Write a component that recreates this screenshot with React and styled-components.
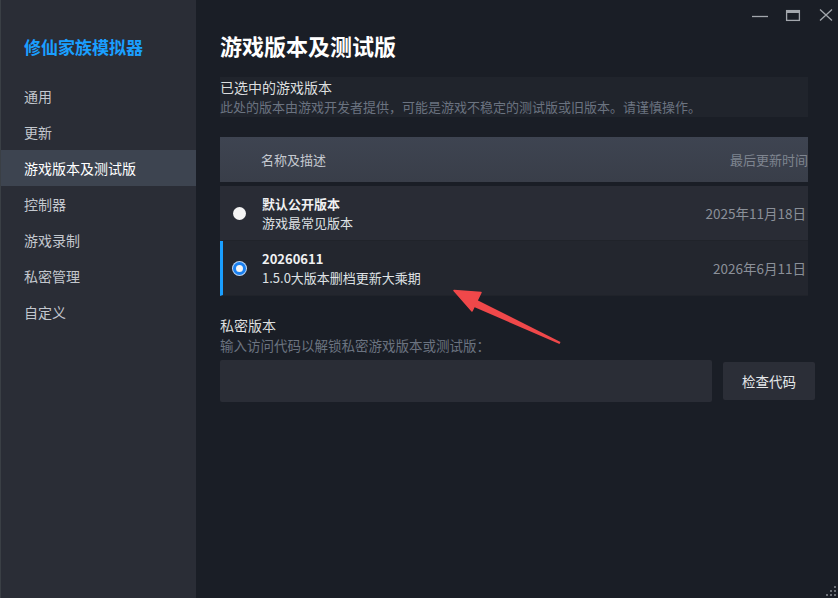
import React from "react";
import styled, { createGlobalStyle } from "styled-components";

const Global = createGlobalStyle`
  html, body { margin: 0; padding: 0; background: #1a1e26; }
  body { font-family: "Noto Sans CJK SC", "Noto Sans", sans-serif; }
  * { box-sizing: border-box; }
`;

const Window = styled.div`
  width: 838px;
  height: 598px;
  display: flex;
  background: #1a1e26;
  position: relative;
  overflow: hidden;
`;

const Sidebar = styled.div`
  width: 196px;
  flex: none;
  background: #2a2d36;
  display: flex;
  flex-direction: column;
  padding-top: 34px;
  border-left: 1px solid #3a3f45;
`;

const AppTitle = styled.div`
  color: #1a9fff;
  font-weight: 700;
  font-size: 17px;
  line-height: 26px;
  padding-left: 23px;
  margin-bottom: 18px;
`;

const NavItem = styled.div`
  height: 36px;
  display: flex;
  align-items: center;
  padding-left: 23px;
  font-size: 14px;
  color: ${(p) => (p.$active ? "#ffffff" : "#c3c7ce")};
  background: ${(p) => (p.$active ? "#3d4450" : "transparent")};
`;

const Main = styled.div`
  flex: 1;
  padding: 30px 30px 0 24px;
  display: flex;
  flex-direction: column;
`;

const Heading = styled.h1`
  margin: 0;
  color: #ffffff;
  font-size: 22px;
  font-weight: 700;
  line-height: 30px;
`;

const InfoBox = styled.div`
  margin-top: 17px;
  background: #20242c;
  padding: 1px 0 0 0;
`;

const SectionTitle = styled.div`
  font-size: 14px;
  line-height: 19px;
  color: #dcdedf;
`;

const SectionDesc = styled.div`
  font-size: ${(p) => p.$size || "13px"};
  line-height: 20px;
  color: #6b7380;
`;

const Table = styled.div`
  margin-top: 20px;
  display: flex;
  flex-direction: column;
`;

const TableHead = styled.div`
  height: 45px;
  background: linear-gradient(#3e4451, #393e49);
  display: flex;
  align-items: center;
  justify-content: space-between;
  padding: 0 0 0 41px;
  font-size: 13px;
  margin-bottom: 4px;
`;

const HeadLabel = styled.span`
  color: ${(p) => p.$color};
`;

const Row = styled.div`
  height: 55px;
  display: flex;
  align-items: center;
  background: ${(p) => (p.$selected ? "#23262e" : "#292c35")};
  border-left: 3px solid ${(p) => (p.$selected ? "#1a9fff" : "transparent")};
  border-bottom: 1px solid #20232a;
  padding: 0 2px 0 10px;
`;

const Radio = styled.span`
  width: 13px;
  height: 13px;
  border-radius: 50%;
  flex: none;
  background: #f4f4f4;
  border: ${(p) => (p.$on ? "3px solid #1a80f0" : "none")};
  box-shadow: ${(p) => (p.$on ? "0 0 0 1px #bcd6f5" : "none")};
  margin-right: 16px;
`;

const RowText = styled.div`
  flex: 1;
  display: flex;
  flex-direction: column;
`;

const RowName = styled.div`
  color: #f0f1f2;
  font-weight: 700;
  font-size: 13px;
  line-height: 19px;
`;

const RowDesc = styled.div`
  color: #dfe1e4;
  font-size: 13px;
  line-height: 19px;
`;

const RowDate = styled.div`
  color: #8b9099;
  font-size: 13.5px;
`;

const Private = styled.div`
  margin-top: 20px;
`;

const CodeRow = styled.div`
  margin-top: 5px;
  display: flex;
  align-items: center;
  gap: 11px;
`;

const CodeInput = styled.input`
  flex: 1;
  height: 42px;
  background: #2a2d36;
  border: none;
  border-radius: 2px;
  outline: none;
  color: #fff;
`;

const CheckButton = styled.button`
  width: 92px;
  height: 38px;
  background: #2b2e37;
  border: none;
  border-radius: 2px;
  color: #e6e8ea;
  font-family: inherit;
  font-size: 13.5px;
  margin-right: -7px;
`;

const Controls = styled.div`
  position: absolute;
  top: 8px;
  right: 4px;
  display: flex;
  align-items: center;
  gap: 17px;
`;

const CtrlBtn = styled.div`
  width: 16px;
  height: 14px;
  display: flex;
  align-items: center;
  justify-content: center;
`;

const Overlay = styled.svg`
  position: absolute;
  left: 0;
  top: 0;
  pointer-events: none;
`;

const Grip = styled.svg`
  position: absolute;
  right: 0;
  bottom: 0;
`;

const navItems = ["通用", "更新", "游戏版本及测试版", "控制器", "游戏录制", "私密管理", "自定义"];

export default function App() {
  return (
    <>
      <Global />
      <Window>
        <Sidebar>
          <AppTitle>修仙家族模拟器</AppTitle>
          {navItems.map((n) => (
            <NavItem key={n} $active={n === "游戏版本及测试版"}>
              {n}
            </NavItem>
          ))}
        </Sidebar>
        <Main>
          <Heading>游戏版本及测试版</Heading>
          <InfoBox>
            <SectionTitle>已选中的游戏版本</SectionTitle>
            <SectionDesc>此处的版本由游戏开发者提供，可能是游戏不稳定的测试版或旧版本。请谨慎操作。</SectionDesc>
          </InfoBox>
          <Table>
            <TableHead>
              <HeadLabel $color="#c5c9d0">名称及描述</HeadLabel>
              <HeadLabel $color="#7f8590">最后更新时间</HeadLabel>
            </TableHead>
            <Row>
              <Radio />
              <RowText>
                <RowName>默认公开版本</RowName>
                <RowDesc>游戏最常见版本</RowDesc>
              </RowText>
              <RowDate>2025年11月18日</RowDate>
            </Row>
            <Row $selected>
              <Radio $on />
              <RowText>
                <RowName>20260611</RowName>
                <RowDesc>1.5.0大版本删档更新大乘期</RowDesc>
              </RowText>
              <RowDate>2026年6月11日</RowDate>
            </Row>
          </Table>
          <Private>
            <SectionTitle>私密版本</SectionTitle>
            <SectionDesc $size="13.5px">输入访问代码以解锁私密游戏版本或测试版：</SectionDesc>
            <CodeRow>
              <CodeInput />
              <CheckButton>检查代码</CheckButton>
            </CodeRow>
          </Private>
        </Main>
        <Controls>
          <CtrlBtn>
            <svg width="16" height="14" viewBox="0 0 16 14">
              <line x1="0" y1="8.5" x2="16" y2="8.5" stroke="#a3a7ad" strokeWidth="1.3" />
            </svg>
          </CtrlBtn>
          <CtrlBtn>
            <svg width="16" height="14" viewBox="0 0 16 14">
              <rect x="1.6" y="2.6" width="12.8" height="9.8" fill="none" stroke="#a3a7ad" strokeWidth="1.3" />
              <line x1="1.6" y1="4" x2="14.4" y2="4" stroke="#a3a7ad" strokeWidth="2" />
            </svg>
          </CtrlBtn>
          <CtrlBtn>
            <svg width="16" height="14" viewBox="0 0 16 14">
              <path d="M2 1.5 L14 12.5 M14 1.5 L2 12.5" stroke="#a3a7ad" strokeWidth="1.3" />
            </svg>
          </CtrlBtn>
        </Controls>
        <Overlay width="838" height="598" viewBox="0 0 838 598">
          <path d="M470 296.5 L560.5 342 L559.5 344 L466 303.5 Z" fill="#f0484a" />
          <path d="M454 290.5 L481 292.5 L472 311 Z" fill="#f0484a" strokeLinejoin="round" stroke="#f0484a" strokeWidth="1.5" />
        </Overlay>
        <Grip width="14" height="14" viewBox="0 0 14 14">
          <rect x="10" y="2" width="2" height="2" fill="#6d7178" />
          <rect x="6" y="6" width="2" height="2" fill="#6d7178" />
          <rect x="10" y="6" width="2" height="2" fill="#6d7178" />
          <rect x="2" y="10" width="2" height="2" fill="#6d7178" />
          <rect x="6" y="10" width="2" height="2" fill="#6d7178" />
          <rect x="10" y="10" width="2" height="2" fill="#6d7178" />
        </Grip>
      </Window>
    </>
  );
}
